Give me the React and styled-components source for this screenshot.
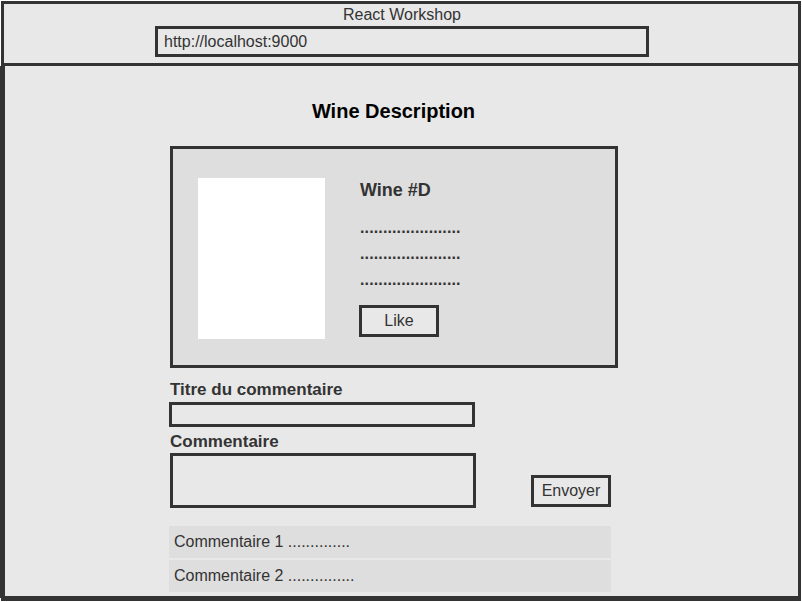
import React from "react";
import styled, { createGlobalStyle } from "styled-components";

const INK = "#333333";
const BG = "#e8e8e8";
const PANEL = "#dedede";

const GlobalStyle = createGlobalStyle`
  html, body { margin: 0; padding: 0; background: #ffffff; }
  body { font-family: "Liberation Sans", Arial, sans-serif; color: ${INK}; }
  * { box-sizing: border-box; }
`;

const Window = styled.div`
  margin: 1px 0 0 1px;
  width: 800px;
  height: 600px;
  border: 3px solid ${INK};
  background: ${BG};
  display: flex;
  flex-direction: column;
`;

const Header = styled.header`
  height: 62px;
  border-bottom: 3px solid ${INK};
  padding: 2px 0 0 151px;
  display: flex;
  flex-direction: column;
  align-items: flex-start;
`;

const WindowTitle = styled.div`
  align-self: stretch;
  margin-left: -149px;
  text-align: center;
  font-size: 16px;
  line-height: 18px;
  color: ${INK};
`;

const UrlBar = styled.div`
  margin-top: 2px;
  width: 494px;
  height: 31px;
  border: 3px solid ${INK};
  padding-left: 6px;
  display: flex;
  align-items: center;
  font-size: 16px;
  color: ${INK};
`;

const Content = styled.main`
  flex: 1;
  border-left: 1px solid ${INK};
  border-bottom: 2px solid ${INK};
  box-shadow: -4px 0 0 ${INK};
  padding-left: 164px;
  display: flex;
  flex-direction: column;
`;

const Column = styled.div`
  width: 449px;
  display: flex;
  flex-direction: column;
`;

const PageTitle = styled.h1`
  margin: 34px 0 0;
  font-size: 20px;
  line-height: 23px;
  font-weight: bold;
  text-align: center;
  color: #000;
`;

const Card = styled.section`
  margin: 23px 0 0 1px;
  width: 448px;
  height: 222px;
  border: 3px solid ${INK};
  background: ${PANEL};
  padding: 29px 0 0 25px;
  display: flex;
  align-items: flex-start;
`;

const Picture = styled.div`
  width: 127px;
  height: 161px;
  background: #ffffff;
  flex-shrink: 0;
`;

const Details = styled.div`
  margin: 2px 0 0 35px;
  display: flex;
  flex-direction: column;
  align-items: flex-start;
`;

const WineName = styled.div`
  font-size: 18px;
  line-height: 21px;
  font-weight: bold;
  color: ${INK};
`;

const DotLines = styled.div`
  margin-top: 14px;
  display: flex;
  flex-direction: column;
`;

const DotLine = styled.div`
  font-size: 16px;
  line-height: 26px;
  font-weight: bold;
  letter-spacing: 0.13px;
  color: ${INK};
  white-space: nowrap;
`;

const Button = styled.button`
  width: 80px;
  height: 32px;
  padding: 0;
  border: 3px solid ${INK};
  border-radius: 0;
  background: ${BG};
  font-family: "Liberation Sans", Arial, sans-serif;
  font-size: 16px;
  color: ${INK};
  cursor: pointer;
`;

const LikeButton = styled(Button)`
  margin: 12px 0 0 -1px;
`;

const FormRow = styled.form`
  width: 442px;
  display: flex;
  justify-content: space-between;
  align-items: flex-end;
`;

const Fields = styled.div`
  display: flex;
  flex-direction: column;
  align-items: flex-start;
`;

const Label = styled.label`
  margin-top: ${(p) => p.$top}px;
  padding-left: 1px;
  font-size: 17px;
  line-height: 20px;
  font-weight: bold;
  color: ${INK};
`;

const TextInput = styled.input`
  margin-top: 2px;
  width: 306px;
  height: 25px;
  border: 3px solid ${INK};
  border-radius: 0;
  background: ${BG};
  outline: none;
  padding: 0 4px;
  font-family: "Liberation Sans", Arial, sans-serif;
  font-size: 14px;
`;

const TextArea = styled.textarea`
  margin: 1px 0 0 1px;
  width: 306px;
  height: 55px;
  border: 3px solid ${INK};
  border-radius: 0;
  background: ${BG};
  outline: none;
  resize: none;
  display: block;
  padding: 4px;
  font-family: "Liberation Sans", Arial, sans-serif;
  font-size: 14px;
`;

const SendButton = styled(Button)`
  margin-bottom: 1px;
`;

const CommentList = styled.ul`
  margin: 18px 0 0;
  padding: 0;
  list-style: none;
  width: 442px;
  display: flex;
  flex-direction: column;
  gap: 2px;
`;

const CommentItem = styled.li`
  height: 32px;
  background: ${PANEL};
  padding-left: 5px;
  display: flex;
  align-items: center;
  font-size: 16px;
  color: ${INK};
`;

const comments = [
  "Commentaire 1 ..............",
  "Commentaire 2 ...............",
];

export default function App() {
  const dots = ".".repeat(22);
  return (
    <>
      <GlobalStyle />
      <Window>
        <Header>
          <WindowTitle>React Workshop</WindowTitle>
          <UrlBar>http://localhost:9000</UrlBar>
        </Header>
        <Content>
          <Column>
            <PageTitle>Wine Description</PageTitle>
            <Card>
              <Picture />
              <Details>
                <WineName>Wine #D</WineName>
                <DotLines>
                  <DotLine>{dots}</DotLine>
                  <DotLine>{dots}</DotLine>
                  <DotLine>{dots}</DotLine>
                </DotLines>
                <LikeButton type="button">Like</LikeButton>
              </Details>
            </Card>
            <FormRow onSubmit={(e) => e.preventDefault()}>
              <Fields>
                <Label $top={12} htmlFor="titre">Titre du commentaire</Label>
                <TextInput id="titre" type="text" />
                <Label $top={5} htmlFor="commentaire">Commentaire</Label>
                <TextArea id="commentaire" />
              </Fields>
              <SendButton type="submit">Envoyer</SendButton>
            </FormRow>
            <CommentList>
              {comments.map((c) => (
                <CommentItem key={c}>{c}</CommentItem>
              ))}
            </CommentList>
          </Column>
        </Content>
      </Window>
    </>
  );
}
